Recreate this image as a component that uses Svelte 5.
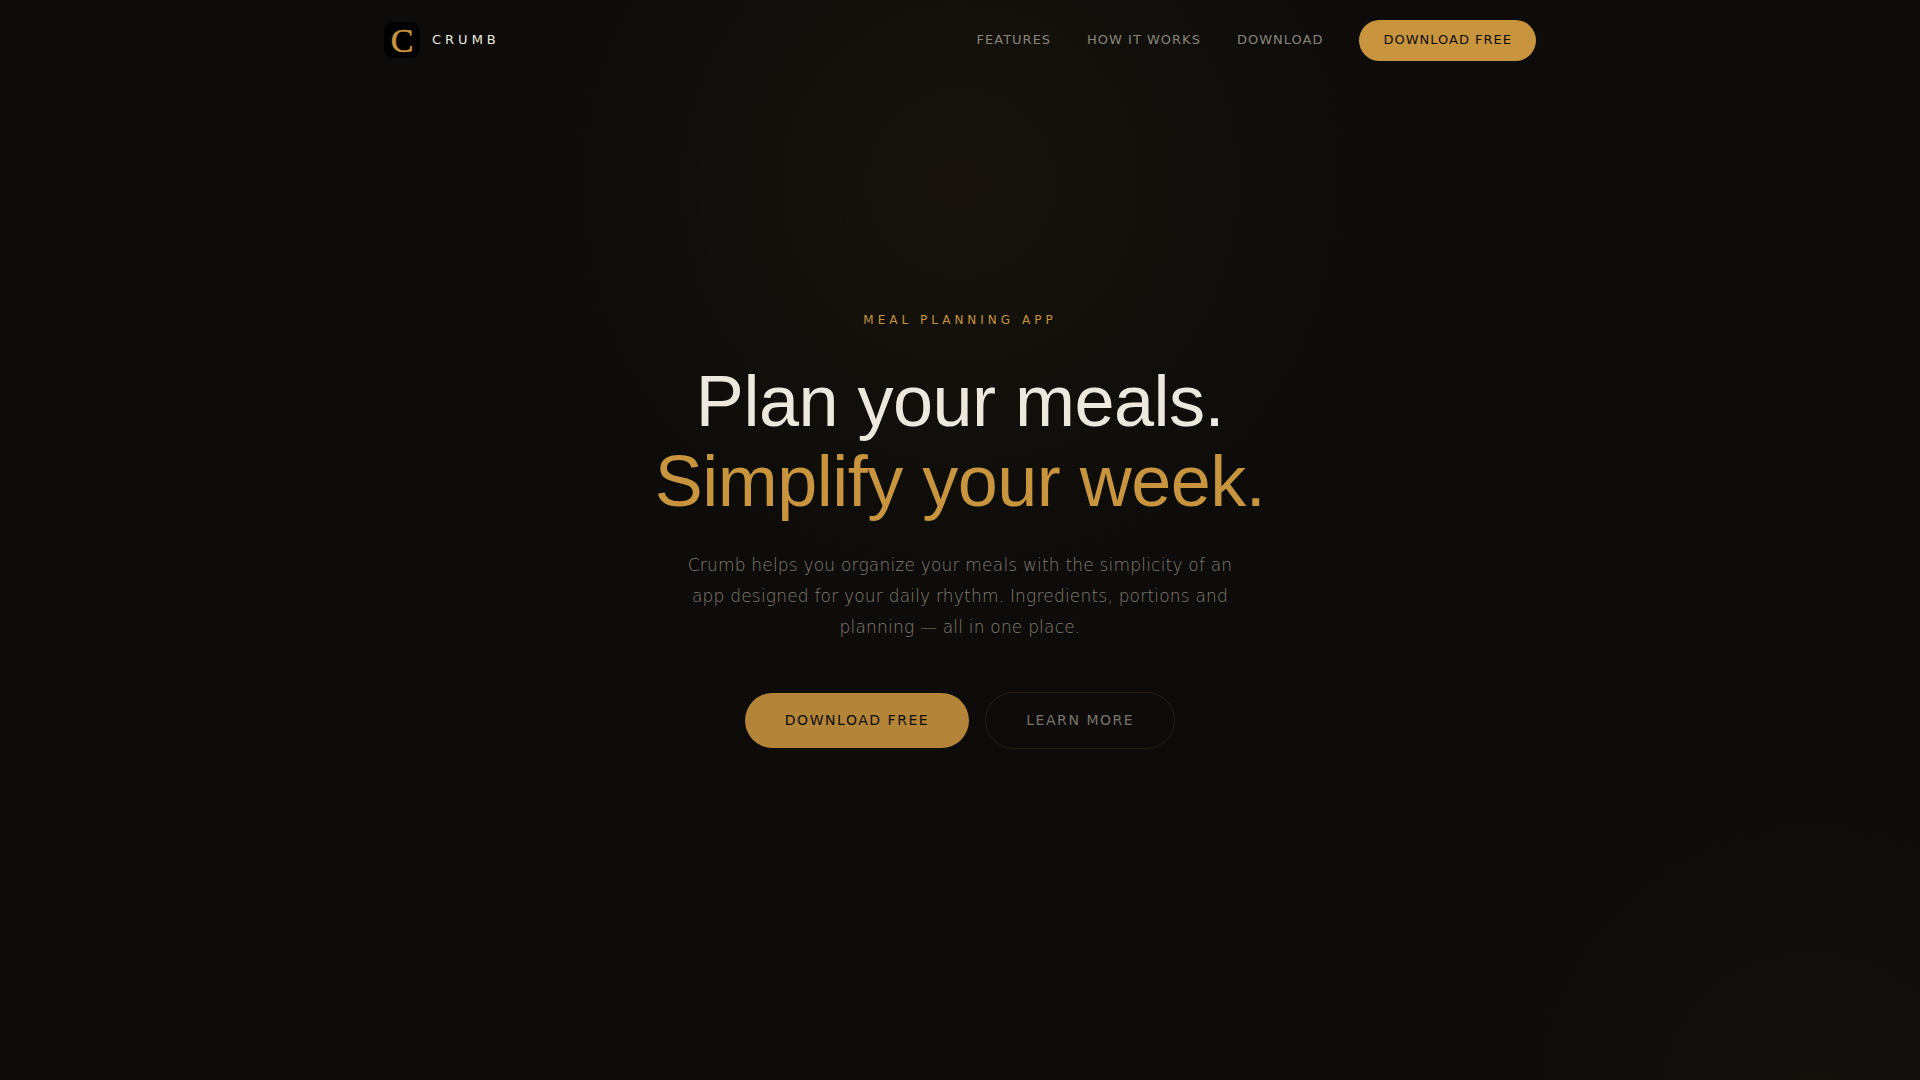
<script>
  const links = [
    { label: "Features", href: "#features" },
    { label: "How it works", href: "#how" },
    { label: "Download", href: "#download" }
  ]
</script>

<div class="page">
  <div class="glow glow-top"></div>
  <div class="glow glow-corner"></div>

  <header class="header">
    <div class="bar">
      <a class="brand" href="#top">
        <svg class="logo" viewBox="0 0 36 36" aria-hidden="true">
          <rect width="36" height="36" rx="9" fill="#000" />
          <text x="18" y="30" text-anchor="middle">C</text>
        </svg>
        <span>CRUMB</span>
      </a>
      <nav class="nav">
        {#each links as link}
          <a class="nav-link" href={link.href}>{link.label}</a>
        {/each}
        <a class="nav-cta" href="#download">Download free</a>
      </nav>
    </div>
  </header>

  <main class="hero" id="top">
    <p class="eyebrow">Meal planning app</p>
    <h1>Plan your meals.<br /><span class="accent">Simplify your week.</span></h1>
    <p class="lead">
      Crumb helps you organize your meals with the simplicity of an app designed
      for your daily rhythm. Ingredients, portions and planning — all in one place.
    </p>
    <div class="actions">
      <a class="btn primary" href="#download">Download free</a>
      <a class="btn ghost" href="#features">Learn more</a>
    </div>
  </main>
</div>

<style>
:global(body) {
  margin: 0;
  background: #0d0c0a;
}
.page {
  position: relative;
  min-height: 100vh;
  overflow: hidden;
  display: flex;
  flex-direction: column;
  box-sizing: border-box;
  background: #0d0c0a;
  color: #ede8de;
  font-family: "DejaVu Sans", sans-serif;
}
a {
  text-decoration: none;
  color: inherit;
}
.glow {
  position: absolute;
  border-radius: 50%;
  pointer-events: none;
}
.glow-top {
  top: -20%;
  left: 50%;
  width: 800px;
  height: 800px;
  margin-left: -400px;
  background: radial-gradient(circle, rgba(200, 148, 62, 0.06) 0%, transparent 70%);
}
.glow-corner {
  right: -10%;
  bottom: -30%;
  width: 600px;
  height: 600px;
  background: radial-gradient(circle, rgba(200, 168, 72, 0.03) 0%, transparent 70%);
}
.header {
  position: relative;
  padding: 20px 24px;
}
.bar {
  max-width: 1152px;
  margin: 0 auto;
  display: flex;
  align-items: center;
  justify-content: space-between;
}
.brand {
  display: flex;
  align-items: center;
  gap: 12px;
  font-size: 13px;
  line-height: 16px;
  letter-spacing: 4px;
}
.logo {
  width: 36px;
  height: 36px;
  overflow: visible;
}
.logo text {
  fill: #c8943e;
  stroke: #c8943e;
  stroke-width: 0.5;
  font-family: "Liberation Serif", serif;
  font-size: 34px;
  letter-spacing: 0;
}
.nav {
  display: flex;
  align-items: center;
  gap: 36px;
  font-size: 13px;
  line-height: 16px;
  letter-spacing: 1px;
  text-transform: uppercase;
}
.nav-link {
  color: #8a8378;
}
.nav-cta {
  margin-bottom: -1px;
  padding: 12px 24px 13px;
  border-radius: 100px;
  background: #c8943e;
  color: #0d0c0a;
}
.hero {
  position: relative;
  flex: 1;
  display: flex;
  flex-direction: column;
  align-items: center;
  justify-content: center;
  padding: 0 24px 100px;
  text-align: center;
}
.eyebrow {
  margin: 0 0 32px;
  font-size: 12px;
  line-height: 18px;
  letter-spacing: 4px;
  text-transform: uppercase;
  color: #c8943e;
}
h1 {
  margin: 0 0 29px;
  font-family: "Liberation Sans", sans-serif;
  font-size: 72px;
  font-weight: 400;
  line-height: 80px;
  letter-spacing: -0.5px;
}
.accent {
  color: #c8943e;
}
.lead {
  max-width: 560px;
  margin: 0 0 49px;
  font-size: 17px;
  font-weight: 200;
  line-height: 31px;
  letter-spacing: 0.2px;
  color: #857e70;
}
.actions {
  display: flex;
  flex-wrap: wrap;
  align-items: center;
  justify-content: center;
  gap: 16px;
}
.btn {
  padding: 19px 40px;
  border-radius: 100px;
  font-size: 14px;
  line-height: 17px;
  letter-spacing: 0.11em;
  text-transform: uppercase;
}
.primary {
  background: #b48538;
  color: #0d0c0a;
}
.ghost {
  border: 1px solid #281e12;
  color: #79736a;
}
</style>
